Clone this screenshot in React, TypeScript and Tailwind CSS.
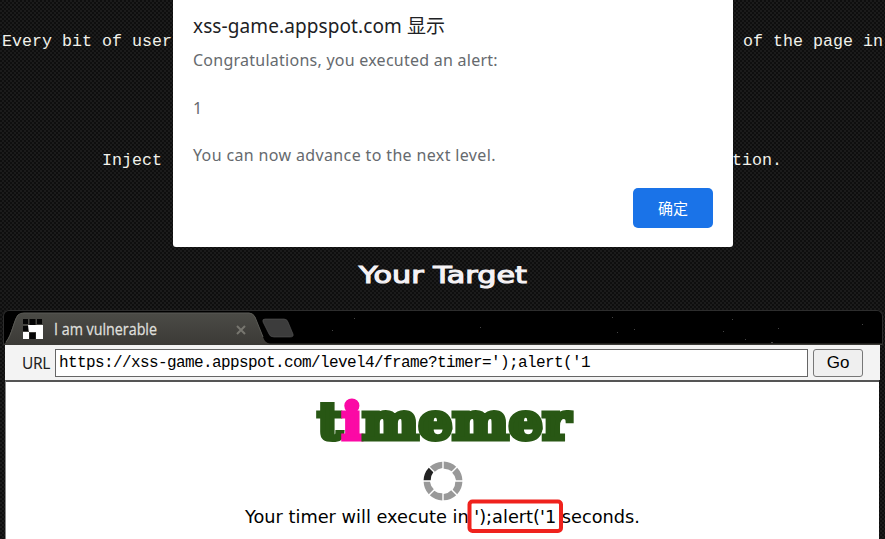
const SEGMENTS = [0, 45, 90, 135, 180, 225, 270, 315];

function Logo() {
  return (
    <svg className="h-[60px] w-[264px] overflow-visible" viewBox="0 0 264 60" aria-label="timemer">
      <text
        x="6.500"
        y="48"
        textLength="253"
        lengthAdjust="spacingAndGlyphs"
        fill="#285714"
        stroke="#285714"
        strokeWidth="5"
        style={{ fontFamily: '"DejaVu Serif", serif', fontWeight: 700, fontSize: 51 }}
      >
        t<tspan fill="#fb09a5" stroke="#fb09a5">i</tspan>memer
      </text>
    </svg>
  );
}

function Spinner() {
  return (
    <svg className="size-10" viewBox="-20 -20 40 40">
      {SEGMENTS.map((a) => (
        <path
          key={a}
          d="M0.7 -19.4A19.4 19.4 0 0 1 13.2 -14.2L8.7 -9.7A12.3 12.3 0 0 0 0.7 -12.3Z"
          fill={a === 270 ? "#222" : "#999"}
          transform={`rotate(${a})`}
        />
      ))}
    </svg>
  );
}

function TabStrip() {
  return (
    <div className="h-[35px] overflow-hidden rounded-t-md border border-b-0 border-[#2d2d2d] bg-black">
      <svg className="block h-[34px] w-[878px]" viewBox="4 312 878 34">
        <defs>
          <linearGradient id="tab" x1="0" y1="0" x2="0" y2="1">
            <stop offset="0" stopColor="#4b4b46" />
            <stop offset="1" stopColor="#3b3a36" />
          </linearGradient>
        </defs>
        <path d="M4 345C11 340 13 321 18 316Q20 314 24 314H249Q253 314 255 318L263 338Q265 344 270 344.500H882V346H4Z" fill="url(#tab)" />
        <path d="M6 343C12 336 14 321 18 316Q20 314 24 314H249Q253 314 255 318L263 338" fill="none" stroke="#5b5b56" />
        <path d="M265 320H284Q287 320 288 323L293 335Q294 338 290 338H274Q270 338 269 335L263 323Q262 320 265 320Z" fill="#3c3c3c" stroke="#555" strokeWidth=".6" />
        <path d="M23 320h5v5h-5zM29.500 320h6v6h-6zM37 320h5v5h-5zM23 327h5v5h-5zM29.500 334h6v6h-6z" fill="#050505" />
        <path d="M28 326h8v7h-7zM36 326h7v7h-7zM23 333h6v7h-6zM36 333h7v7h-7z" fill="#fff" />
        <path d="M237 327l8 8m0-8l-8 8" stroke="#77766f" strokeWidth="2" />
        <path d="M612 318h1v1h-1zM634 330h1v1h-1zM617 333h1v1h-1zM732 320h1v1h-1zM778 329h1v1h-1zM723 332h1v1h-1zM745 340h1v1h-1zM862 325h1v1h-1zM771 343h2v1h-2zM332 331h1v1h-1zM354 319h1v1h-1zM480 328h1v1h-1z" fill="#444" />
        <text x="54" y="336" textLength="103" lengthAdjust="spacingAndGlyphs" fill="#dfdfdb" stroke="#dfdfdb" strokeWidth=".3" style={{ fontFamily: '"Open Sans", sans-serif', fontSize: 16, fontWeight: 500 }}>
          I am vulnerable
        </text>
      </svg>
    </div>
  );
}

export default function App() {
  return (
    <div className="relative flex h-[539px] w-[885px] flex-col overflow-hidden bg-[#101010] bg-[conic-gradient(#1b1b1b_25%,#0e0e0e_0_50%,#1b1b1b_0_75%,#0e0e0e_0)] bg-size-[4px_4px] font-['Liberation_Sans',sans-serif]">
      <div className="flex justify-between px-[2px] pt-[30px] font-['Liberation_Mono',monospace] text-[16.67px] leading-6 whitespace-pre text-[#f1f1ea]">
        <span>Every bit of user</span>
        <span>of the page in</span>
      </div>
      <div className="flex justify-between pr-[103px] pl-[102px] pt-[95px] font-['Liberation_Mono',monospace] text-[16.67px] leading-6 whitespace-pre text-[#f1f1ea]">
        <span>Inject</span>
        <span>tion.</span>
      </div>
      <div className="mt-[85px] flex h-[36px] justify-center">
        <svg className="h-9 w-[172px]" viewBox="0 0 172 36">
          <text x="2" y="24.500" textLength="168" lengthAdjust="spacingAndGlyphs" fill="#f5f2f5" stroke="#f5f2f5" strokeWidth="1.1" style={{ fontFamily: '"DejaVu Sans", sans-serif', fontSize: 23, fontWeight: 400 }}>
            Your Target
          </text>
        </svg>
      </div>
      <div className="mt-[16px] flex flex-1 flex-col pr-[2px] pl-[3px]">
        <TabStrip />
        <div className="mr-[3px] ml-[2px] flex h-[35px] items-start bg-[#f3f3f3] pt-[4px] pl-[17px]">
          <span className="w-[33px] font-['Noto_Sans','Open_Sans',sans-serif] text-[15.5px] leading-[28px] tracking-[-0.3px] text-[#222]">URL</span>
          <div className="h-[28px] w-[753px] border border-[#666] bg-white pl-[3px] font-['Liberation_Mono',monospace] text-[16px] leading-[26px] tracking-[-0.6px] whitespace-pre text-black">
            {"https://xss-game.appspot.com/level4/frame?timer=');alert('1"}
          </div>
          <button className="ml-[5px] h-[28px] w-[50px] rounded-[3px] border border-[#777] bg-[#efefef] text-[17px] leading-[26px] text-black">Go</button>
        </div>
        <div className="mr-[4px] ml-[2px] flex flex-1 flex-col items-center border-t-2 border-l border-t-[#555] border-l-[#888] bg-white pt-[9px]">
          <Logo />
          <div className="mt-[10px]">
            <Spinner />
          </div>
          <svg className="-mt-[3px] mr-[2px] h-10 w-[400px] shrink-0" viewBox="242 498 400 40">
            <text x="245" y="523" textLength="395" lengthAdjust="spacingAndGlyphs" style={{ fontFamily: '"DejaVu Sans", sans-serif', fontSize: 17.6 }}>
              {"Your timer will execute in ');alert('1 seconds."}
            </text>
            <rect x="469.500" y="501.500" width="91.500" height="29.500" rx="3" fill="none" stroke="#ef221d" strokeWidth="4" />
          </svg>
        </div>
      </div>

      <div className="absolute top-0 left-[173px] flex h-[247px] w-[560px] flex-col rounded-b-[3px] bg-white px-5 pt-[13px] font-['Noto_Sans','Noto_Sans_CJK_SC',sans-serif] text-[16px] tracking-[0.25px] text-[#666a6e]">
        <h1 className="text-[19px] leading-[26px] tracking-[0.1px] whitespace-nowrap text-[#202124]">xss-game.appspot.com 显示</h1>
        <p className="mt-[9px] leading-6">Congratulations, you executed an alert:</p>
        <p className="mt-6 leading-6">1</p>
        <p className="mt-[23px] leading-6 tracking-[0.36px]">You can now advance to the next level.</p>
        <button className="mt-[21px] h-[40px] w-[80px] self-end rounded-[5px] bg-[#1a73e8] text-[15px] tracking-normal text-white">确定</button>
      </div>
    </div>
  );
}
